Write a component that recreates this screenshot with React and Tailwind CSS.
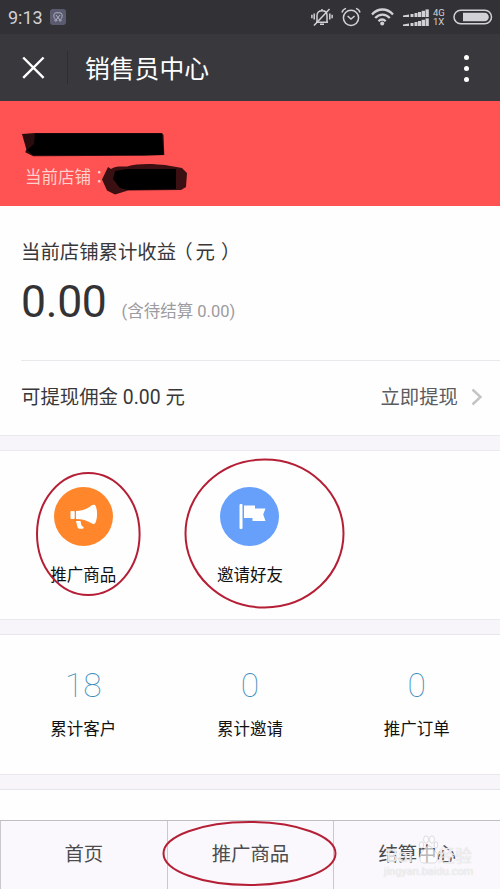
import React from 'react';

const stats = [
  { label: '累计客户', value: '18' },
  { label: '累计邀请', value: '0' },
  { label: '推广订单', value: '0' }
];

const tabs = ['首页', '推广商品', '结算中心'];

const SignalBars = () => (
  <svg width="26" height="8" viewBox="0 0 26 8" fill="#d2d1d6">
    <path d="M0 8V6.6L6 5.4V8z" />
    <path d="M7.5 8V5h3v3z" />
    <path d="M11.5 8V4h3v4z" />
    <path d="M15 8V3h3.200v5z" />
    <path d="M18.700 8V1.800h3.300V8z" />
    <path d="M22.500 8V.4h3.300V8z" />
  </svg>
);

const StatusBar = () => (
  <div className="flex h-[34px] items-center bg-[#323135] pl-2 pr-[7px] text-[#d2d1d6]">
    <span className="pt-[2px] text-[18px] leading-none">9:13</span>
    <span className="ml-[7px] flex h-4 w-4 items-center justify-center rounded-[3px] bg-[#5b5b70]">
      <svg width="10" height="10" viewBox="0 0 10 10" fill="none" stroke="#b9b9ca" strokeWidth="0.9">
        <path d="M1.5 6.5C.2 4 .8.8 3 .8h4c2.2 0 2.8 3.2 1.5 5.7M3 3l3.500 4.500M7 3L3.500 7.500" />
        <circle cx="2.8" cy="8.2" r="1" />
        <circle cx="7.2" cy="8.2" r="1" />
      </svg>
    </span>
    <div className="ml-auto flex items-center">
      <svg width="22" height="20" viewBox="0 0 22 20" fill="none" stroke="#d2d1d6" strokeWidth="1.5">
        <path d="M5 15.200h12M6 15V8.500C6 5.500 8 3.800 11 3.800s5 1.700 5 4.700V15M9 17.300h4M11 3.500V2" />
        <path d="M3 18.500L18.500 2" />
        <path d="M3.200 6.500v6M.9 7.800v3.400M18.800 6.500v6M21.100 7.800v3.400" />
      </svg>
      <svg className="ml-2" width="20" height="20" viewBox="0 0 20 20" fill="none" stroke="#d2d1d6" strokeWidth="1.5">
        <circle cx="10" cy="10.800" r="7.600" />
        <path d="M6.600 9l3.400 3 3.600-3M1 5.500C1.500 3.500 3 2 5 1.400M19 5.500C18.500 3.500 17 2 15 1.400" />
      </svg>
      <svg className="ml-[10px]" width="23" height="18" viewBox="0 0 23 18" fill="none" stroke="#d2d1d6" strokeWidth="2.3">
        <path d="M1 6.500C7-.2 16-.2 22 6.500M4.200 10c4.200-4.600 10.400-4.600 14.600 0M7.500 13.300c2.200-2.400 5-2.400 7.200 0" />
        <circle cx="11.200" cy="15.600" r="2" fill="#d2d1d6" stroke="none" />
      </svg>
      <div className="ml-[9px] flex flex-col gap-px">
        <SignalBars />
        <SignalBars />
      </div>
      <div className="ml-1 flex w-[14px] flex-col text-[9.5px] leading-[9.5px]">
        <span>4G</span>
        <span>1X</span>
      </div>
      <svg className="ml-[6px]" width="40" height="16" viewBox="0 0 40 16">
        <rect x="1" y="1.200" width="37.500" height="13.500" rx="6.700" fill="none" stroke="#d2d1d6" strokeWidth="1.5" />
        <path d="M10 3.700h21.500a4.300 4.300 0 0 1 0 8.600H10z" fill="#d2d1d6" />
      </svg>
    </div>
  </div>
);

const TitleBar = () => (
  <header className="flex h-[67px] items-center bg-[#39393d] text-white">
    <svg className="ml-[22px]" width="23" height="23" viewBox="0 0 23 23" fill="none" stroke="white" strokeWidth="2.4">
      <path d="M1.200 1.500l20.400 20.400M21.600 1.500L1.200 21.900" />
    </svg>
    <div className="ml-[22px] h-[33px] w-px bg-[#2e2e32]" />
    <h1 className="ml-[17px] pt-[5px] text-[24.8px] leading-none">销售员中心</h1>
    <div className="ml-auto mr-[31px] mt-px flex flex-col gap-[6px]">
      <span className="h-[5px] w-[5px] rounded-full bg-white" />
      <span className="h-[5px] w-[5px] rounded-full bg-white" />
      <span className="h-[5px] w-[5px] rounded-full bg-white" />
    </div>
  </header>
);

const ShopBanner = () => (
  <section className="relative h-[105px] bg-[#ff5353] pl-[25px] pt-[63px]">
    <p className="text-[16.5px] leading-6 text-[#ffd0cc]">
      当前店铺<span className="font-['Noto_Sans_CJK_TC']" lang="zh-TW">：</span>
    </p>
    <svg className="absolute left-0 top-0" width="200" height="105" viewBox="0 0 200 105">
      <path d="M22 33l13-1 127 0 1.500 2 .8 20-20 .8-111 .5-8-4 1-3z" fill="#2b0c0e" />
      <path d="M35 32.500h127l1.500 21.500H33l-6-5 7-6z" fill="#000" />
      <path d="M108 66l3 2c4-3 8-2.500 16-2.500 12-4 30-2.500 38-1.500l17 3 5 5-1 14-5 3-53 .5-13 4-8-4-5-11z" fill="#3a1013" />
      <path d="M115 70l12-2h49v20l-48 1-8-2-7-9z" fill="#000" />
    </svg>
  </section>
);

const Earnings = () => (
  <section className="h-[230px] border-b border-[#ebe9ee] bg-[#fefefe]">
    <div className="ml-[21px] h-[155px] border-b border-[#e9e8ec] pt-[33px]">
      <p className="text-[19.4px] leading-7 text-[#38383a]">
        当前店铺累计收益
        <span className="-ml-[3px] mr-[3px]">（</span>
        元
        <span className="ml-[6px]">）</span>
      </p>
      <div className="mt-2 flex items-baseline">
        <span className="text-[44.5px] leading-[54px] tracking-[-0.3px] text-[#333335]">0.00</span>
        <span className="ml-[15px] text-[16.5px] text-[#9c9b9f]">(含待结算 0.00)</span>
      </div>
    </div>
    <div className="ml-[21px] flex h-[73px] items-center justify-between pr-[17px] text-[19.4px]">
      <span className="text-[#38383a]">可提现佣金 0.00 元</span>
      <span className="flex items-center text-[#5c5c5e]">
        立即提现
        <svg className="ml-[13px]" width="12" height="18" viewBox="0 0 12 18" fill="none" stroke="#c4c4c6" strokeWidth="2.4">
          <path d="M1.500 1.500L9.500 9l-8 7.500" />
        </svg>
      </span>
    </div>
  </section>
);

const Shortcut = ({ label, color, children }) => (
  <div className="flex flex-col items-center pt-[36px]">
    <div className={`flex h-[59px] w-[59px] items-center justify-center rounded-full ${color}`}>
      {children}
    </div>
    <span className="mt-[18px] text-[16.5px] leading-6 text-[#111]">{label}</span>
  </div>
);

const Shortcuts = () => (
  <section className="mt-[14px] grid h-[170px] grid-cols-3 border-y border-[#ebe9ee] bg-[#fefefe]">
    <Shortcut label="推广商品" color="bg-[#ff862b]">
      <svg width="59" height="59" viewBox="0 0 59 59" fill="white">
        <rect x="16.500" y="24" width="4.200" height="8" rx="1" />
        <path d="M22 24c6-.2 11-2 15.500-5.500 1-.9 2.500-1 3.700-.3 2.500 4 2.500 13.500 0 18-1.200 1-2.700.8-3.700 0C33 33.500 28 32 22 32z" />
        <path d="M22 34h4.500l1 4.500 2 1.500c.4 1-.2 1.800-1 1.800h-3c-1 0-1.600-.8-2-1.800z" />
      </svg>
    </Shortcut>
    <Shortcut label="邀请好友" color="bg-[#66a0fb]">
      <svg width="59" height="59" viewBox="0 0 59 59" fill="white">
        <rect x="19.500" y="17" width="3" height="25" rx="1" />
        <path d="M24 18.500h11v3h10.500l-2.300 6 2.300 6.500H32.500v-3H24z" />
      </svg>
    </Shortcut>
  </section>
);

const Stats = () => (
  <section className="mt-[14px] grid h-[141px] grid-cols-3 border-y border-[#e9e7ec] bg-[#fefefe]">
    {stats.map((stat) => (
      <div key={stat.label} className="flex flex-col items-center pt-[31px]">
        <span className="text-[33.5px] font-thin leading-10 text-[#3b8dbb]">{stat.value}</span>
        <span className="mt-[12px] text-[16.5px] leading-6 text-[#111]">{stat.label}</span>
      </div>
    ))}
  </section>
);

const TabBar = () => (
  <nav className="grid h-[69px] grid-cols-3 border-t border-[#bfbec3] bg-[#faf8fc]">
    {tabs.map((tab) => (
      <div
        key={tab}
        className="flex items-center justify-center border-l border-[#c9c8cd] pb-px text-[19.4px] text-[#4c4c4e]"
      >
        {tab}
      </div>
    ))}
  </nav>
);

const Watermark = () => (
  <div className="absolute left-[384px] top-[835px] w-[92px] text-white/60 [text-shadow:0_0_1px_#ccc]">
    <div className="flex items-end text-[17px] leading-[18px]">
      <span className="w-[35px] pl-[2px] text-[19px]">Bai</span>
      <svg width="19" height="30" viewBox="0 0 19 30" fill="white" fillOpacity="0.6" stroke="#d3d2d6" strokeWidth="0.8">
        <ellipse cx="2.500" cy="10" rx="2.200" ry="3.200" />
        <ellipse cx="7" cy="4.500" rx="2.400" ry="3.700" />
        <ellipse cx="13" cy="4.500" rx="2.400" ry="3.700" />
        <ellipse cx="17" cy="10" rx="1.800" ry="3.200" />
        <path d="M10 11c3 0 4 4 7 6s2 11-2 11H4c-4 0-4-8-1-11s4-6 7-6z" />
      </svg>
      <span>经验</span>
    </div>
    <p className="text-[11px] leading-[13px]">jingyan.baidu.com</p>
  </div>
);

// hand drawn circles over the page
const Marks = () => (
  <svg
    className="pointer-events-none absolute left-0 top-0"
    width="500"
    height="889"
    viewBox="0 0 500 889"
    fill="none"
    stroke="#b51f36"
    strokeWidth="2"
  >
    <ellipse cx="88.300" cy="534" rx="51.300" ry="61" />
    <ellipse cx="264.500" cy="533.500" rx="79" ry="74" />
    <ellipse cx="249.500" cy="853.500" rx="86" ry="31.500" />
  </svg>
);

export default function App() {
  return (
    <div className="relative flex h-[889px] w-[500px] flex-col overflow-hidden bg-[#f7f5f9] font-[Roboto,'Noto_Sans_CJK_SC',sans-serif]">
      <StatusBar />
      <TitleBar />
      <ShopBanner />
      <Earnings />
      <Shortcuts />
      <Stats />
      <div className="mt-[14px] flex-1 border-t border-[#e6e4e9] bg-[#fefefe]" />
      <TabBar />
      <Watermark />
      <Marks />
    </div>
  );
}
